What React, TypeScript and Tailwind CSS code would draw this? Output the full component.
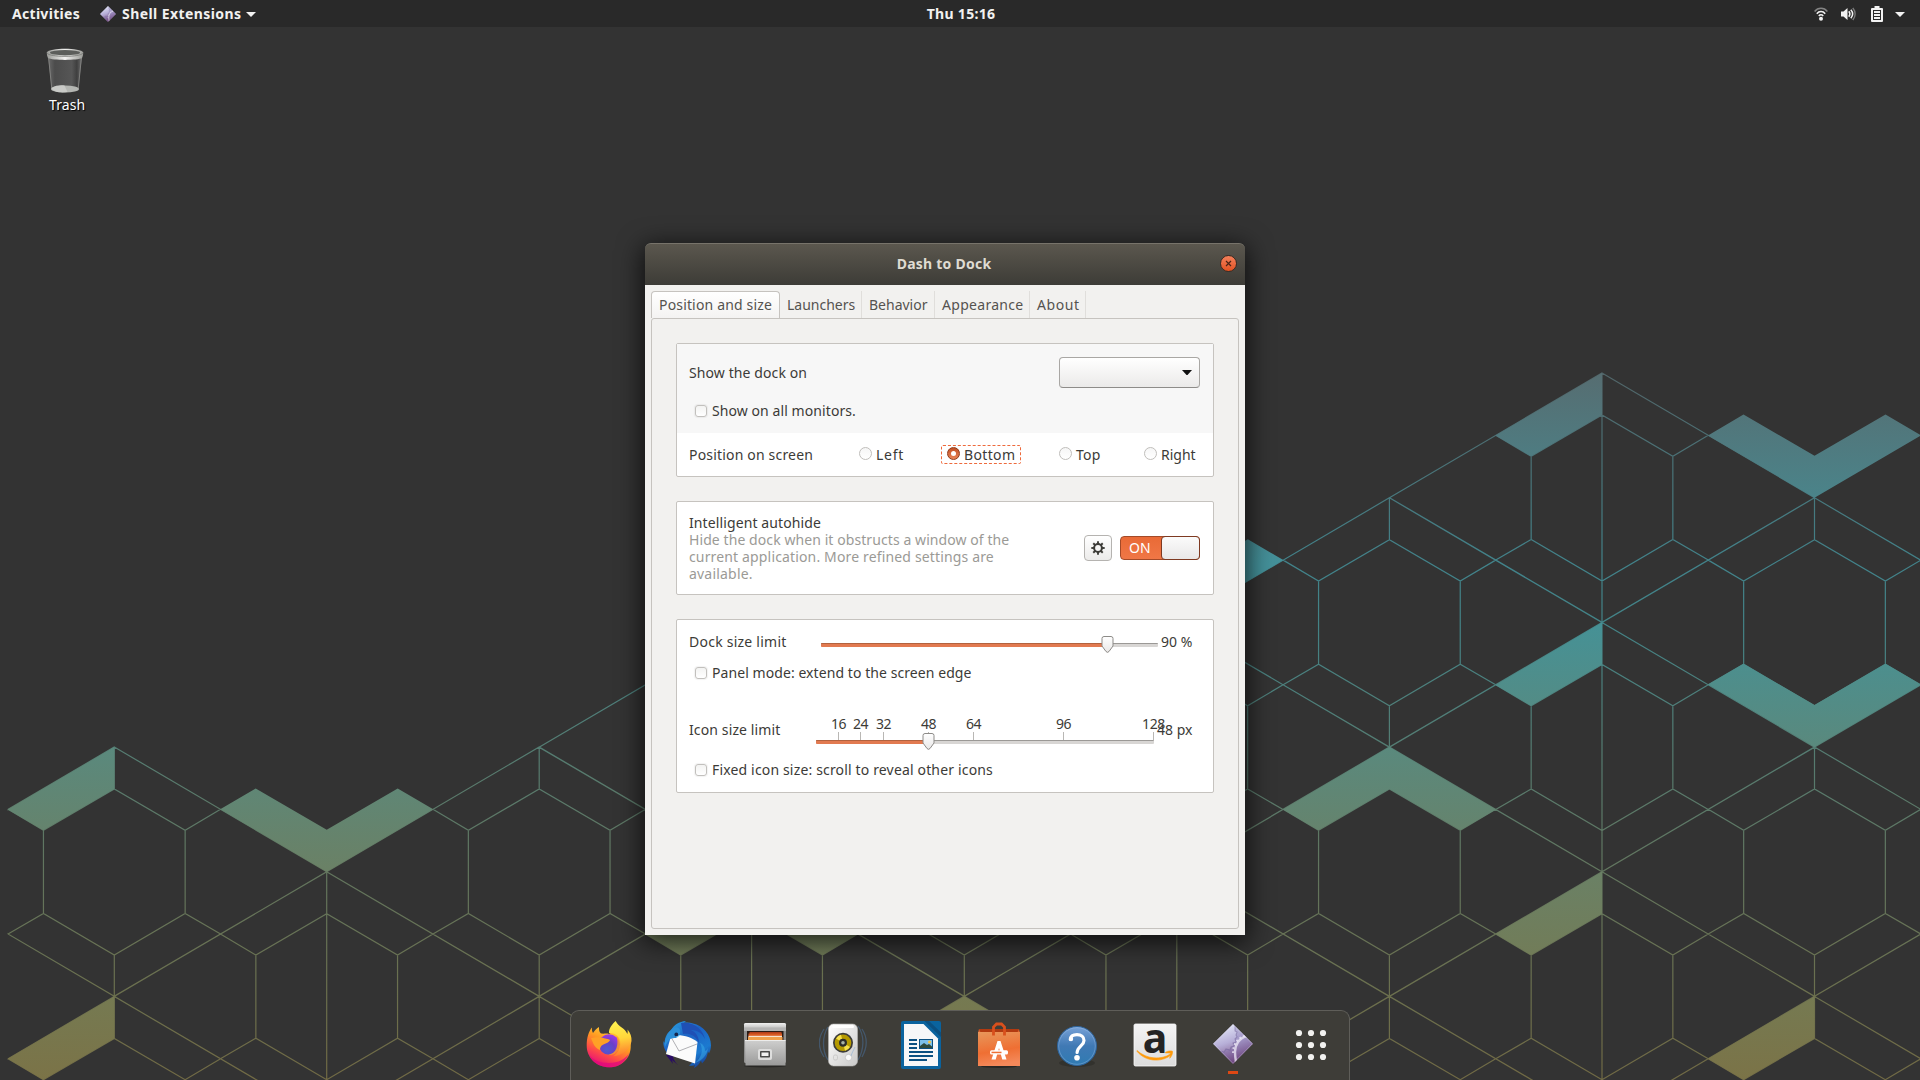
import type { ReactNode } from 'react';

/* ---------- Wallpaper ---------- */

const HALF_W = 212.53;
const HALF_H = 124.67;
const SHORT_COLUMNS = [114.3, 539.2, 964.3, 1389.4, 1814.5];

const cells: [number, number][] = [
  [1602, 373],
  [1389.4, 497.8],
  [1814.5, 497.8],
  [1176.8, 622.5],
  [1602, 622.5],
  [751.6, 622.5],
  [114.3, 747],
  [539.2, 747],
  [964.3, 747],
  [1389.4, 747],
  [1814.5, 747],
  [326.7, 871.7],
  [751.6, 871.7],
  [1176.8, 871.7],
  [1602, 871.7],
  [114.3, 996.4],
  [539.2, 996.4],
  [964.3, 996.4],
  [1389.4, 996.4],
  [1814.5, 996.4],
];

function cellPath([x, y]: [number, number]) {
  const w = HALF_W;
  const h = HALF_H;
  const inner = w / 3;
  const outline = `M${x} ${y}l${w} ${h}l${-w} ${h}l${-w} ${-h}z`;
  const top = `M${x - w / 2} ${y + h / 2}L${x - inner} ${y + 83.3}L${x} ${y + 42}L${x + inner} ${y + 83.3}L${x + w / 2} ${y + h / 2}`;
  const bottom = `M${x - w / 2} ${y + h * 1.5}L${x - inner} ${y + 166.5}L${x} ${y + 208}L${x + inner} ${y + 166.5}L${x + w / 2} ${y + h * 1.5}`;
  const sides = `M${x - inner} ${y + 83.3}V${y + 166.5}M${x + inner} ${y + 83.3}V${y + 166.5}`;
  const spine = SHORT_COLUMNS.includes(x)
    ? `M${x} ${y}V${y + 42}M${x} ${y + 208}V${y + 2 * h}`
    : `M${x} ${y}V${y + 2 * h}`;
  return outline + top + bottom + sides + spine;
}

const ribbons: [number, number][] = [
  [114.3, 747],
  [1602, 373],
  [1602, 622.5],
  [1602, 871.7],
  [114.3, 996.4],
  [1814.5, 996.4],
];
const chevronsUp: [number, number][] = [
  [751.6, 871.7],
  [1389.4, 747],
  [964.3, 996.4],
];
const chevronsDown: [number, number][] = [
  [326.7, 871.7],
  [1814.5, 497.8],
  [1814.5, 747],
  [1176.8, 622.5],
];

function Wallpaper() {
  return (
    <svg className="absolute inset-0" width="1920" height="1080" viewBox="0 0 1920 1080">
      <defs>
        <linearGradient id="mesh" gradientUnits="userSpaceOnUse" x1="0" y1="373" x2="0" y2="1080">
          <stop offset="0" stopColor="#566d71" />
          <stop offset="0.17" stopColor="#4b8389" />
          <stop offset="0.27" stopColor="#44919a" />
          <stop offset="0.36" stopColor="#469195" />
          <stop offset="0.53" stopColor="#5a897d" />
          <stop offset="0.7" stopColor="#6a8166" />
          <stop offset="0.88" stopColor="#757a52" />
          <stop offset="1" stopColor="#7b7347" />
        </linearGradient>
        <clipPath id="meshClip">
          <rect x="7.5" y="370" width="1912.5" height="710" />
        </clipPath>
      </defs>
      <g clipPath="url(#meshClip)">
        <path d={cells.map(cellPath).join('')} fill="none" stroke="url(#mesh)" strokeWidth="1.2" strokeOpacity="0.85" />
        <g fill="url(#mesh)">
          {ribbons.map(([x, y]) => (
            <path key={`r${x}-${y}`} d={`M${x} ${y}L${x - 106.5} ${y + 62.4}L${x - 71} ${y + 83.3}L${x} ${y + 42}z`} />
          ))}
          {chevronsUp.map(([x, y]) => (
            <path
              key={`u${x}-${y}`}
              d={`M${x} ${y}L${x - 106.5} ${y + 62.4}L${x - 71} ${y + 83.3}L${x} ${y + 42}L${x + 71} ${y + 83.3}L${x + 106.5} ${y + 62.4}z`}
            />
          ))}
          {chevronsDown.map(([x, y]) => (
            <path
              key={`d${x}-${y}`}
              d={`M${x} ${y}L${x - 106.5} ${y - 62.4}L${x - 71} ${y - 83.3}L${x} ${y - 42}L${x + 71} ${y - 83.3}L${x + 106.5} ${y - 62.4}z`}
            />
          ))}
        </g>
      </g>
    </svg>
  );
}

/* ---------- Icons ---------- */

function ExtensionIcon({ size, id }: { size: number; id: string }) {
  return (
    <svg width={size} height={size} viewBox="4 3 40 40">
      <defs>
        <linearGradient id={id} x1="0.25" y1="0" x2="0.6" y2="1">
          <stop offset="0" stopColor="#e6eafa" />
          <stop offset="0.45" stopColor="#b7afd8" />
          <stop offset="1" stopColor="#6d3c72" />
        </linearGradient>
        <clipPath id={`${id}c`}>
          <path d="M24 3L44 22.8L24 43L4 22.8z" />
        </clipPath>
      </defs>
      <g clipPath={`url(#${id}c)`}>
        <rect x="4" y="3" width="40" height="40" fill={`url(#${id})`} />
        <path d="M26 3v7l2 1-1 3 1 2-2 2 1 3-3 1 1 3-3 1-1 3-4-1-2 3-4-1-2 2" fill="none" stroke="#6e5f95" strokeOpacity="0.45" strokeWidth="1.1" />
        <path d="M26 3v7l2 1-1 3 1 2-2 2 1 3-3 1 1 3-3 1-1 3-4-1-2 3-4-1 10 12h24V3z" fill="#5a4590" fillOpacity="0.2" />
        <path d="M38 15c-8 2-12 9-12 16 0 4 .5 7 1 10" fill="none" stroke="#eeeaf7" strokeOpacity="0.75" strokeWidth="2.4" />
        <path d="M36 14.500c-8 3-12 9-12 17.500" fill="none" stroke="#eeeaf7" strokeOpacity="0.75" strokeWidth="2" strokeDasharray="2 2.2" />
      </g>
      <path d="M24 3.6L43.4 22.8L24 42.4L4.6 22.8z" fill="none" stroke="#e9e6f5" strokeOpacity="0.35" strokeWidth="0.9" />
    </svg>
  );
}

function FirefoxIcon() {
  return (
    <svg width="48" height="48" viewBox="0 0 48 48">
      <defs>
        <linearGradient id="ffBody" x1="0.75" y1="0.1" x2="0.3" y2="1">
          <stop offset="0" stopColor="#ffd43a" />
          <stop offset="0.35" stopColor="#ff9a22" />
          <stop offset="0.65" stopColor="#ff4f45" />
          <stop offset="1" stopColor="#e5077e" />
        </linearGradient>
        <linearGradient id="ffFlame" x1="0.4" y1="0" x2="0.5" y2="1">
          <stop offset="0" stopColor="#fff450" />
          <stop offset="0.5" stopColor="#ffd63a" />
          <stop offset="1" stopColor="#ff7a2e" />
        </linearGradient>
        <radialGradient id="ffGlobe" cx="0.4" cy="0.75" r="0.8">
          <stop offset="0" stopColor="#4f5bd0" />
          <stop offset="0.5" stopColor="#6a3fc9" />
          <stop offset="1" stopColor="#a43be8" />
        </radialGradient>
      </defs>
      <path d="M7 6.5c-.3 2.500.2 4 1 5.500 2-3 4-5 6-6 0 3 0 5 2 6.500 3 .5 6-.5 8 .5 3-2 6-4 9-3 6 1 11 6 12.500 12C47.500 35 38 46.300 24.500 46.300 11 46.300 1.700 36.500 1.700 24.500 1.700 17 3.500 10.500 7 6.500z" fill="url(#ffBody)" />
      <path d="M4 34c4 5 11 8 20 8s17-4 20-10c-3 9-10 14.300-19.500 14.300C15 46.300 7 41 4 34z" fill="#e00a7c" fillOpacity="0.75" />
      <path d="M30.700 0c-4 3.500-7 7.500-6.700 12 5 0 9 2 10.500 6 2.500 7-1 14-6 17 9 0 17-7 18-15 .3-4-1-8-4-11.500.3 2 .3 3-.2 4.500-2-6-9-7-11.600-13z" fill="url(#ffFlame)" />
      <circle cx="24" cy="23.500" r="10.300" fill="url(#ffGlobe)" />
      <path d="M31.500 15c3 3 4.500 9 1.500 14-2 3.500-6 5.500-10 5 4-1 7-3 8.500-7s1-9 0-12z" fill="#ff9b25" fillOpacity="0.850" />
      <path d="M6 17c5-1 10-1 14 .5 2 .3 4 .8 5 1.500-1 3-5 3.500-7.500 5-1.500 1-2.500 2.500-2.500 5-3-1-5.500-3.500-6.500-6z" fill="#ffa026" />
    </svg>
  );
}

function ThunderbirdIcon() {
  return (
    <svg width="48" height="48" viewBox="0 0 48 48">
      <defs>
        <linearGradient id="tbBody" x1="0.1" y1="0" x2="0.8" y2="1">
          <stop offset="0" stopColor="#2aa5e3" />
          <stop offset="0.4" stopColor="#1d62c4" />
          <stop offset="0.75" stopColor="#1b7ad0" />
          <stop offset="1" stopColor="#17388e" />
        </linearGradient>
      </defs>
      <path d="M3 34l7 9-1-4 6 5c-4-4-5-7-5-10z" fill="#2a0d63" />
      <path d="M8 9c3-5 8-8.500 15-9l-2 1.800c3-.5 6-.3 9 .7 10 2 18 11 18 22 0 3-1 6-2 8l-1-2c-1 6-3 9-6 12l-1-3c-2 4-4 6-7 7.500l1-3c-2 1-4 1-6 .5 2-1 3-3 4-5L14 18 4 32C1 28 0 24 .500 20l1 2C2 16 4 12 8 9z" fill="url(#tbBody)" />
      <path d="M18 2c12-2 22 6 24 16-3-6-8-9-14-9 6 3 8 8 8 13-4-8-9-10-16-9z" fill="#1f50b5" />
      <path d="M37 22c4 8 1 15-5 20 8-3 12-8 13-15-1 2-2 3-3 3 0-4-2-7-5-8z" fill="#38a8e6" fillOpacity="0.55" />
      <path d="M8 15C18 13 28 16 34.500 21L32 42.500 3 33z" fill="#fbfbfb" />
      <path d="M8 16l8 14L34 23" fill="none" stroke="#b0b0b4" strokeWidth="1" />
      <path d="M8 9c3-3 7-4 9 0 1 3-1 6-4 8-2 0-4 0-6 1-2 2-4 5-5 8-1-7 2-13 6-17z" fill="#2b8fd8" />
      <circle cx="13.300" cy="13.500" r="1.900" fill="#16254a" />
      <path d="M13 16c2 0 3-1 4-2" fill="none" stroke="#7fd0f5" strokeWidth="0.8" />
    </svg>
  );
}

function FilesIcon() {
  return (
    <svg width="48" height="48" viewBox="0 0 48 48">
      <defs>
        <linearGradient id="flTop" x1="0" y1="0" x2="0" y2="1">
          <stop offset="0" stopColor="#f1f1f0" />
          <stop offset="1" stopColor="#a9a9a8" />
        </linearGradient>
        <linearGradient id="flFront" x1="0" y1="0" x2="0" y2="1">
          <stop offset="0" stopColor="#cfcfce" />
          <stop offset="1" stopColor="#9a9a99" />
        </linearGradient>
      </defs>
      <ellipse cx="24" cy="45" rx="21" ry="1.500" fill="#000" fillOpacity="0.35" />
      <rect x="3" y="2" width="42" height="40" rx="1.500" fill="#8f8f8e" />
      <rect x="3" y="2" width="42" height="8" rx="1.500" fill="url(#flTop)" />
      <rect x="3" y="6.500" width="42" height="3.500" fill="#b5b5b4" />
      <rect x="6" y="10" width="36.500" height="10" fill="#2a1c16" />
      <rect x="8.500" y="11" width="32" height="3" fill="#b5401b" />
      <rect x="7.500" y="12.500" width="33.500" height="4" fill="#d95a22" />
      <rect x="7.500" y="14.800" width="33.500" height="1.200" fill="#f6e3cf" />
      <rect x="7" y="16" width="34.500" height="4" fill="#f0a04b" />
      <path d="M4 19h40.500v25.500h-40z" fill="url(#flFront)" />
      <path d="M4 19.500h40.500" stroke="#ececeb" />
      <rect x="17" y="28" width="14" height="11" rx="2" fill="#dededd" />
      <rect x="19" y="30" width="10" height="6.500" rx="0.800" fill="#4a4a49" />
      <rect x="20.500" y="31.500" width="7" height="3.500" fill="#f2f2f1" />
    </svg>
  );
}

function RhythmboxIcon() {
  return (
    <svg width="48" height="48" viewBox="0 0 48 48">
      <defs>
        <linearGradient id="rbBox" x1="0" y1="0" x2="1" y2="1">
          <stop offset="0" stopColor="#ffffff" />
          <stop offset="1" stopColor="#c9c9c8" />
        </linearGradient>
      </defs>
      <g fill="none" stroke="#4d7fb8" strokeOpacity="0.4" strokeWidth="1.300">
        <path d="M9 6c-6 9-6 24 0 33M5 8c-6 9-6 19 0 28" />
        <path d="M39 5c7 10 6 24 0 34M43 8c6 9 5 19 0 28" />
      </g>
      <rect x="9.500" y="3" width="29" height="42" rx="5" fill="url(#rbBox)" stroke="#b5b5b4" strokeWidth="0.600" />
      <rect x="13" y="4" width="22" height="3" rx="1.500" fill="#fff" />
      <circle cx="24" cy="21.800" r="10" fill="#3c3c3a" />
      <circle cx="24" cy="21.800" r="8.300" fill="#b59a00" />
      <path d="M24 21.800L17 17.500a8.300 8.300 0 0 1 5-3.700zM24 21.800l7 4.300a8.300 8.300 0 0 1-5 3.700z" fill="#f6e04a" />
      <circle cx="24" cy="21.800" r="4" fill="#2d2d2b" />
      <circle cx="24" cy="21.800" r="1.800" fill="#a9b3a4" />
      <circle cx="29.500" cy="36.500" r="3.200" fill="#fafafa" stroke="#b5b5b4" strokeWidth="0.600" />
      <path d="M32 35c1-3 2-5 4-9" fill="none" stroke="#8cb0d6" strokeOpacity="0.600" />
      <rect x="14.500" y="34" width="4" height="5" rx="1.500" fill="none" stroke="#c5c5c4" strokeWidth="0.800" />
    </svg>
  );
}

function WriterIcon() {
  return (
    <svg width="48" height="48" viewBox="0 0 48 48">
      <path d="M6 0h22.500L44 15.500V46a2 2 0 0 1-2 2H6a2 2 0 0 1-2-2V2a2 2 0 0 1 2-2z" fill="#0a639e" />
      <path d="M28.500 0H42a2 2 0 0 1 2 2v12z" fill="#0a639e" />
      <path d="M27.500 0h4.500l12 11.500v4.500z" fill="#0b5081" />
      <path d="M7 3h19.500L41 17.500V45H7z" fill="#f6f7f8" />
      <g fill="#0b5081">
        <path d="M12 18h8v2h-8zM12 22h8v2h-8zM12 26h8v2h-8zM12 30h24v2H12zM12 34h24v2H12zM12 38h18v2H12z" />
        <path d="M22 18h14v10H22z" />
      </g>
      <path d="M23 19h12v8H23z" fill="#7cc0e8" />
      <path d="M23 27v-2l4-3 3 2 2-1 3 2.500V27z" fill="#2f4a3a" />
      <circle cx="32.500" cy="21" r="1.500" fill="#f5c342" />
    </svg>
  );
}

function SoftwareIcon() {
  return (
    <svg width="48" height="48" viewBox="0 0 48 48">
      <defs>
        <linearGradient id="swBag" x1="0.1" y1="0" x2="0.3" y2="1">
          <stop offset="0" stopColor="#e8965a" />
          <stop offset="0.6" stopColor="#ef6f33" />
          <stop offset="1" stopColor="#f4895a" />
        </linearGradient>
      </defs>
      <ellipse cx="24" cy="45.500" rx="18" ry="1.500" fill="#000" fillOpacity="0.35" />
      <path d="M4 8h40l-2 5H6z" fill="#b23a10" />
      <path d="M4 8l2 4H3zM44 8l-2 4h3z" fill="#e0622b" />
      <path d="M3 11h42v34H3z" fill="url(#swBag)" />
      <path d="M18.500 14.500V6l3-3h5l3 3v8.500" fill="none" stroke="#d9501c" strokeWidth="2.800" />
      <path d="M22.500 20h3L31.500 38.500h-4.200L24 27l-3.300 11.500h-4.200z" fill="#fff" />
      <rect x="15" y="29.300" width="18" height="4.200" rx="1.500" fill="#fff" />
      <rect x="16.500" y="30.700" width="10" height="1.500" fill="#ef6f33" />
    </svg>
  );
}

function HelpIcon() {
  return (
    <svg width="48" height="48" viewBox="0 0 48 48">
      <defs>
        <linearGradient id="hpBall" x1="0" y1="0" x2="0" y2="1">
          <stop offset="0" stopColor="#77a2d8" />
          <stop offset="0.500" stopColor="#4079b4" />
          <stop offset="1" stopColor="#2f7bb2" />
        </linearGradient>
      </defs>
      <ellipse cx="24" cy="42" rx="18" ry="4" fill="#000" fillOpacity="0.180" />
      <circle cx="24" cy="25" r="19.500" fill="url(#hpBall)" stroke="#2d639a" />
      <circle cx="24" cy="25" r="18.300" fill="none" stroke="#a8c6ea" strokeOpacity="0.350" />
      <path d="M17.300 18.500c.3-3 3-4.800 6.700-4.800 4.200 0 7 2.300 7 5.800 0 5.200-6.500 5.700-6.900 12" fill="none" stroke="#fff" strokeWidth="3.200" strokeLinecap="round" />
      <circle cx="18" cy="18" r="2.200" fill="#fff" />
      <circle cx="24" cy="36.800" r="2.800" fill="#fff" />
    </svg>
  );
}

function AmazonIcon() {
  return (
    <svg className="overflow-visible" width="48" height="48" viewBox="0 0 48 48">
      <defs>
        <linearGradient id="azTile" x1="0" y1="0" x2="0" y2="1">
          <stop offset="0" stopColor="#f4f4f4" />
          <stop offset="1" stopColor="#dcdcdc" />
        </linearGradient>
      </defs>
      <rect x="3" y="3" width="42" height="42" rx="1.500" fill="url(#azTile)" stroke="#fafafa" strokeWidth="0.800" />
      <text x="24" y="31.500" textAnchor="middle" fontSize="41" fontWeight="700" fontFamily="Noto Sans, sans-serif" fill="#242424">
        a
      </text>
      <path d="M6 29.500C16 38.500 30 39 39.500 33c.6-.4 1.200.5.600 1C30 42 14 40.500 6 30.300z" fill="#ff9a0a" stroke="#ff9a0a" strokeWidth="0.600" />
      <path d="M34.500 31.300c2.500-1.500 5.500-1.700 7-1 .3 2-.7 5-2.800 7 .5-2 1.300-3.700.8-4.700-1-.9-3-.7-5-.6z" fill="#ff9a0a" stroke="#ff9a0a" strokeWidth="0.600" />
    </svg>
  );
}

function AppsIcon() {
  const steps = [12, 24, 36];
  return (
    <svg width="48" height="48" viewBox="0 0 48 48" fill="#f2f2f0">
      {steps.flatMap((cy) => steps.map((cx) => <circle key={`${cx}-${cy}`} cx={cx} cy={cy} r="3.100" />))}
    </svg>
  );
}

function TrashIcon() {
  return (
    <svg width="38" height="46" viewBox="0 0 38 46">
      <defs>
        <linearGradient id="trBody" x1="0" y1="0" x2="1" y2="0">
          <stop offset="0" stopColor="#6a6a6a" />
          <stop offset="0.200" stopColor="#4c4c4c" />
          <stop offset="0.700" stopColor="#565656" />
          <stop offset="0.850" stopColor="#3f3f3f" />
          <stop offset="1" stopColor="#707070" />
        </linearGradient>
        <linearGradient id="trRim" x1="0" y1="0" x2="1" y2="0">
          <stop offset="0" stopColor="#9a9b97" />
          <stop offset="0.500" stopColor="#f2f2f0" />
          <stop offset="1" stopColor="#9a9b97" />
        </linearGradient>
      </defs>
      <path d="M2 8l3.500 32c2 4 25 4 27 0L36 8z" fill="url(#trBody)" />
      <path d="M2.500 9l3.200 31M35.500 9l-3.200 31" stroke="#8a8a88" strokeWidth="0.800" />
      <ellipse cx="19" cy="41" rx="14" ry="3.600" fill="#b4b6b2" />
      <path d="M5.500 40c4-3 10-3 13-2.500l3 6.500c-6 1-14 .5-16-4z" fill="#c9cac7" />
      <path d="M.800 4.500C3-.500 35-.500 37.200 4.500c0 2-.4 4-1.200 5.500-4 2.500-30 2.500-34 0C1.200 8.500.800 6.500.800 4.500z" fill="url(#trRim)" />
      <ellipse cx="19" cy="4.700" rx="15" ry="2.700" fill="#5c5e5b" />
      <path d="M1 5c2 4.500 34 4.500 36 0" fill="none" stroke="#777975" strokeWidth="0.800" />
    </svg>
  );
}

/* ---------- Top bar ---------- */

function CaretDown() {
  return (
    <svg width="10" height="5" viewBox="0 0 10 5" fill="#f2f2f2">
      <path d="M0 0h10L5 5z" />
    </svg>
  );
}

function TopBar() {
  return (
    <header className="relative flex h-[27px] shrink-0 items-center bg-[#292929] text-[14px] leading-5 font-bold text-[#f2f1f0]">
      <div className="flex flex-1 items-center">
        <span className="ml-3 w-[88px] tracking-[0.3px]">Activities</span>
        <ExtensionIcon size={16} id="extSmall" />
        <span className="ml-[6px] tracking-[0.420px]">Shell Extensions</span>
        <span className="mt-[2px] ml-[5px]">
          <CaretDown />
        </span>
      </div>
      <span className="ml-[17px] tracking-[0.290px]">Thu 15:16</span>
      <div className="flex flex-1 items-center justify-end pr-[15px]">
        <svg width="14" height="14" viewBox="0 0 14 14" fill="none" stroke="#f2f2f2">
          <path d="M.600 4.500C4 .300 10 .300 13.400 4.500" strokeWidth="1.500" strokeOpacity="0.450" />
          <path d="M2.800 6.700C5 3.800 9 3.800 11.200 6.700M4.800 8.900c1.300-1.600 3.100-1.600 4.400 0" strokeWidth="1.600" />
          <circle cx="7" cy="11.800" r="2" fill="#f2f2f2" stroke="none" />
        </svg>
        <svg className="ml-[13px]" width="15" height="14" viewBox="0 0 15 14" fill="none" stroke="#f2f2f2">
          <path d="M0 4.500h2.500L6.500 1v12L2.500 9.500H0z" fill="#f2f2f2" stroke="none" />
          <path d="M7.800 4.300c1.300 1.600 1.300 3.800 0 5.400M9.800 2.800c2.300 2.600 2.300 5.800 0 8.400" strokeWidth="1.500" />
          <path d="M11.800 1c3 3.600 3 8.400 0 12" strokeWidth="1.500" strokeOpacity="0.400" />
        </svg>
        <svg className="ml-[15px]" width="12" height="16" viewBox="0 0 12 16">
          <path d="M3.500 0h5v2H11a1 1 0 0 1 1 1v12a1 1 0 0 1-1 1H1a1 1 0 0 1-1-1V3a1 1 0 0 1 1-1h2.500z" fill="#f2f2f2" />
          <path d="M2 4h8v10H2z" fill="#292929" />
          <path d="M3 5h6v2H3zM3 8h6v2H3zM3 11h6v2H3z" fill="#f2f2f2" />
        </svg>
        <span className="mt-[2px] ml-3">
          <CaretDown />
        </span>
      </div>
    </header>
  );
}

/* ---------- Window controls ---------- */

function CheckBox({ children }: { children: ReactNode }) {
  return (
    <label className="flex h-5 items-center pl-[18px]">
      <span className="mb-px size-3 shrink-0 rounded-[3px] border border-[#c2c0bd] bg-gradient-to-b from-[#f3f3f2] to-white shadow-[0_0_1px_1px_rgba(0,0,0,0.05)]" />
      {children}
    </label>
  );
}

function Radio({ checked = false }: { checked?: boolean }) {
  return checked ? (
    <span className="mb-[2px] flex size-[13px] items-center justify-center rounded-full border border-[#8e3a1a] bg-gradient-to-b from-[#c24f22] to-[#e98557]">
      <span className="size-[5px] rounded-full bg-white" />
    </span>
  ) : (
    <span className="mb-[2px] size-[13px] rounded-full border border-[#c0bebb] bg-gradient-to-b from-[#f6f6f6] to-white" />
  );
}

function Panel({ children, className }: { children: ReactNode; className: string }) {
  return (
    <section className={`rounded-[2px] border border-[#c6c3bf] bg-white ${className}`}>{children}</section>
  );
}

function Thumb() {
  return (
    <svg width="13" height="18" viewBox="0 0 13 18">
      <defs>
        <linearGradient id="thumb" x1="0" y1="0" x2="0" y2="1">
          <stop offset="0" stopColor="#ffffff" />
          <stop offset="1" stopColor="#e9e8e7" />
        </linearGradient>
      </defs>
      <path d="M3 1.500h7a2 2 0 0 1 2 2V11L8 16.500a2 2 0 0 1-3 0L1 11V3.500a2 2 0 0 1 2-2z" fill="url(#thumb)" stroke="#8d8b88" />
    </svg>
  );
}

function Slider({ width, value, marks = [] }: { width: number; value: number; marks?: { label: string; at: number }[] }) {
  return (
    <div className="relative h-1 shrink-0 rounded-[1px] border-t border-[#9b9996] bg-[#d8d6d4]" style={{ width }}>
      <div className="-mt-px h-1 rounded-l-[1px] border-t border-[#b2623f] bg-[#e27a50]" style={{ width: value }} />
      {marks.map((m) => (
        <div
          key={m.label}
          className="absolute bottom-1 flex w-[25px] flex-col items-center"
          style={{ left: m.at - 12 }}
        >
          <span className="-mb-px leading-[18px] tracking-[-0.400px]">{m.label}</span>
          <span className="h-2 w-px bg-[#b9b7b4]" />
        </div>
      ))}
      <div className="absolute -top-[9px]" style={{ left: value - 6 }}>
        <Thumb />
      </div>
    </div>
  );
}

const iconMarks = [
  { label: '16', at: 22 },
  { label: '24', at: 44 },
  { label: '32', at: 67 },
  { label: '48', at: 112 },
  { label: '64', at: 157 },
  { label: '96', at: 247 },
  { label: '128', at: 337 },
];

const gearTeeth = [0, 45, 90, 135, 180, 225, 270, 315];

function Gear() {
  return (
    <svg width="14" height="14" viewBox="0 0 14 14" fill="none" stroke="#3c3b37">
      <circle cx="7" cy="7" r="3.900" strokeWidth="2" />
      {gearTeeth.map((angle) => (
        <path key={angle} d="M7 3V.300" strokeWidth="1.900" transform={`rotate(${angle} 7 7)`} />
      ))}
    </svg>
  );
}

function Tabs() {
  return (
    <nav className="flex h-[27px] text-[14px] leading-5 text-[#55534f]">
      <div className="w-[129px] rounded-t-[4px] border border-b-0 border-[#c6c3bf] bg-gradient-to-b from-white to-[#f4f3f2] pt-[3px] pl-[7px]">
        <span className="tracking-[0.160px]">Position and size</span>
      </div>
      <div className="w-[82px] border-r border-[#e0dedb] pt-1 pl-[7px]">Launchers</div>
      <div className="w-[73px] border-r border-[#e0dedb] pt-1 pl-[7px]">Behavior</div>
      <div className="w-[95px] border-r border-[#e0dedb] pt-1 pl-[7px] tracking-[0.300px]">Appearance</div>
      <div className="w-[56px] border-r border-[#e0dedb] pt-1 pl-[7px] tracking-[0.600px]">About</div>
    </nav>
  );
}

function DashToDockWindow() {
  return (
    <div className="absolute top-[243px] left-[645px] flex h-[692px] w-[600px] flex-col rounded-t-[6px] shadow-[0_5px_26px_2px_rgba(0,0,0,0.75)]">
      <div className="relative flex h-[42px] shrink-0 items-center justify-center rounded-t-[6px] border-t border-[#77736a] bg-gradient-to-b from-[#5b574e] to-[#3d3c37] pr-[2px] pb-[2px] text-[14px] leading-5 font-bold tracking-[0.240px] text-[#dfdbd2]">
        Dash to Dock
        <button className="absolute top-[11px] right-2 flex size-[17px] items-center justify-center rounded-full border border-[#3a2a22] bg-gradient-to-b from-[#f3805a] to-[#e2511f]">
          <svg width="7" height="7" viewBox="0 0 7 7" stroke="#4a2416" strokeWidth="1.200">
            <path d="M1 1l5 5M6 1L1 6" />
          </svg>
        </button>
      </div>
      <div className="flex flex-1 flex-col bg-[#f2f1ef] p-[6px]">
        <Tabs />
        <div className="flex flex-1 flex-col gap-6 rounded-[3px] border border-[#c6c3bf] px-6 pt-6 text-[14px] leading-5 text-[#3c3b37]">
          <Panel className="h-[134px]">
            <div className="h-[89px] bg-[#f7f7f7] pt-[13px] pr-[13px]">
              <div className="flex h-[31px] items-center justify-between pl-3">
                <span className="tracking-[0.100px]">Show the dock on</span>
                <div className="flex h-[31px] w-[141px] items-center justify-end rounded-[4px] border border-[#a9a7a4] border-b-[#8e8c89] bg-gradient-to-b from-white to-[#ebeae9] pr-[7px]">
                  <svg width="10" height="5" viewBox="0 0 10 5">
                    <path d="M0 0h10L5.500 5h-1z" fill="#111" />
                  </svg>
                </div>
              </div>
              <div className="mt-[13px]">
                <CheckBox>
                  <span className="ml-[5px] tracking-[0.080px]">Show on all monitors.</span>
                </CheckBox>
              </div>
            </div>
            <div className="flex h-[43px] items-center pl-3">
              <span className="w-[170px] tracking-[0.180px]">Position on screen</span>
              <div className="flex w-[82px] items-center gap-1">
                <Radio />
                <span className="tracking-[0.700px]">Left</span>
              </div>
              <div className="mr-[38px] flex h-[19px] w-[80px] items-center gap-1 rounded-[2px] border border-dashed border-[#ee6a3c] pl-[5px]">
                <Radio checked />
                <span className="tracking-[0.350px]">Bottom</span>
              </div>
              <div className="flex w-[85px] items-center gap-1">
                <Radio />
                <span className="tracking-[0.200px]">Top</span>
              </div>
              <div className="flex items-center gap-1">
                <Radio />
                <span>Right</span>
              </div>
            </div>
          </Panel>

          <Panel className="flex h-[94px] items-center pr-[13px] pl-3">
            <div className="flex-1 leading-[17px]">
              <p className="tracking-[0.110px]">Intelligent autohide</p>
              <p className="text-[#9b9a96]">
                <span className="tracking-[0.080px]">Hide the dock when it obstructs a window of the</span>
                <br />
                <span className="tracking-[0.150px]">current application. More refined settings are</span>
                <br />
                <span className="tracking-[0.200px]">available.</span>
              </p>
            </div>
            <button className="mr-2 flex h-[26px] w-7 items-center justify-center rounded-[4px] border border-[#b5b3b0] bg-gradient-to-b from-white to-[#ecebea]">
              <Gear />
            </button>
            <div className="flex h-6 w-20 rounded-[4px] border border-[#a34a28] bg-gradient-to-b from-[#e96a36] to-[#f07746]">
              <span className="w-[41px] pl-2 leading-[22px] text-white">ON</span>
              <span className="-m-px h-6 w-[39px] rounded-[4px] border border-[#7e3a22] bg-gradient-to-b from-[#fbfbfb] to-[#e9e8e8]" />
            </div>
          </Panel>

          <Panel className="h-[174px] pt-3">
            <div className="flex h-5 items-center pl-3">
              <span className="w-[132px] tracking-[0.240px]">Dock size limit</span>
              <div className="mt-[6px]">
                <Slider width={337} value={286} />
              </div>
              <span className="ml-[3px]">90 %</span>
            </div>
            <div className="mt-[11px]">
              <CheckBox>
                <span className="ml-[5px] tracking-[0.070px]">Panel mode: extend to the screen edge</span>
              </CheckBox>
            </div>
            <div className="mt-[31px] flex h-[37px] pl-3">
              <span className="mt-[6px] w-[127px] tracking-[0.120px]">Icon size limit</span>
              <div className="mt-[26px]">
                <Slider width={338} value={112} marks={iconMarks} />
              </div>
              <span className="mt-[6px] ml-[3px]">48 px</span>
            </div>
            <div className="mt-[9px]">
              <CheckBox>
                <span className="ml-[5px] tracking-[0.160px]">Fixed icon size: scroll to reveal other icons</span>
              </CheckBox>
            </div>
          </Panel>
        </div>
      </div>
    </div>
  );
}

/* ---------- Dock ---------- */

function Dock() {
  return (
    <div className="absolute bottom-0 left-[570px] flex h-[70px] w-[780px] gap-[30px] rounded-t-[9px] border border-b-0 border-[#5f5e59] bg-[#3e3d38] pt-[10px] pl-[14px]">
      <FirefoxIcon />
      <ThunderbirdIcon />
      <FilesIcon />
      <RhythmboxIcon />
      <WriterIcon />
      <SoftwareIcon />
      <HelpIcon />
      <AmazonIcon />
      <div className="flex w-12 flex-col items-center pt-[3px]">
        <ExtensionIcon size={40} id="extLarge" />
        <span className="mt-[7px] h-[3px] w-[10px] bg-[#dd4814]" />
      </div>
      <AppsIcon />
    </div>
  );
}

export default function App() {
  return (
    <div className="relative flex h-[1080px] w-[1920px] flex-col overflow-hidden bg-[#333333] font-['Noto_Sans',sans-serif]">
      <Wallpaper />
      <TopBar />
      <div className="relative ml-[46px] flex w-[42px] flex-col pt-[21px] text-[14px] leading-5 text-white">
        <TrashIcon />
        <span className="mt-px ml-[3px] tracking-[0.100px] [text-shadow:1px_1px_1px_#000]">Trash</span>
      </div>
      <DashToDockWindow />
      <Dock />
    </div>
  );
}
